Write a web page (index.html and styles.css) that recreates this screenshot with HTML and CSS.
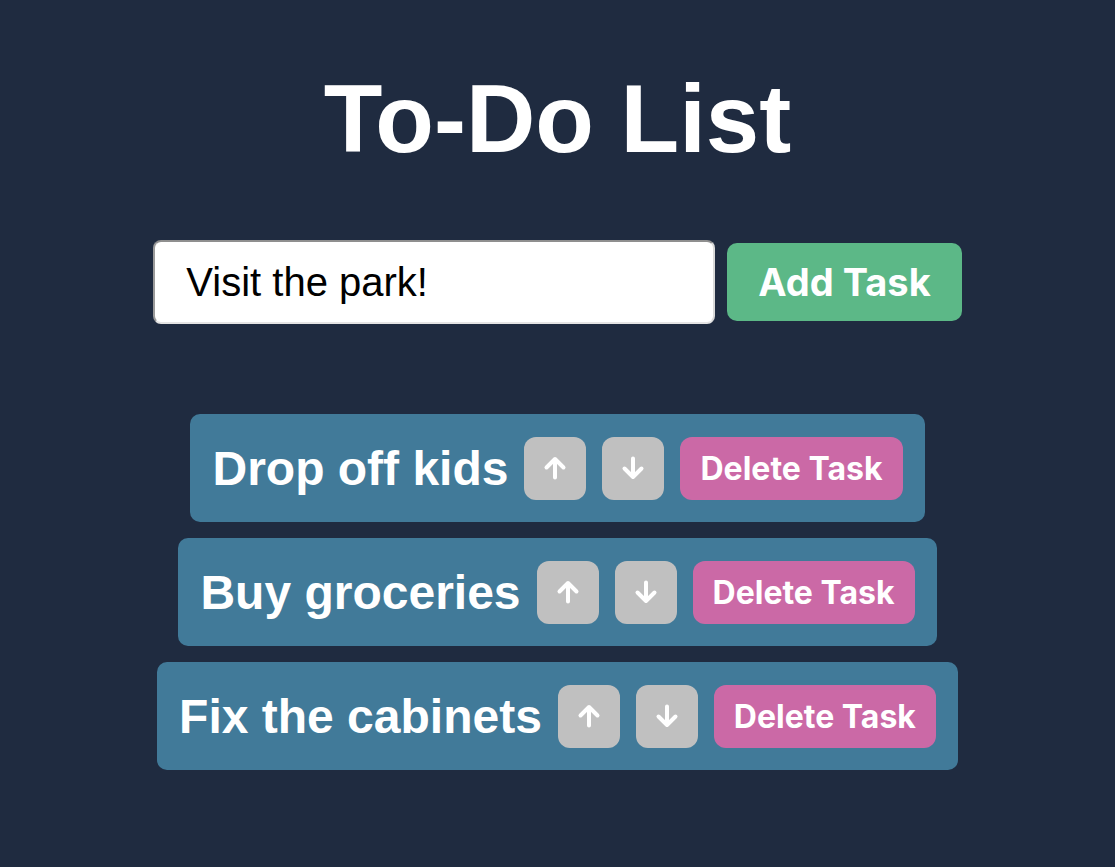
FILE: index.html
```html
<!DOCTYPE html>
<html lang="en">
<head>
<meta charset="utf-8">
<title>To-Do List</title>
<link rel="stylesheet" href="styles.css">
</head>
<body>
<main class="app">
  <h1 class="title">To-Do List</h1>
  <form class="add-form">
    <input class="task-input" type="text" value="Visit the park!">
    <button class="add-btn" type="button">Add Task</button>
  </form>
  <ol class="task-list">
    <li class="task">
      <span class="task-text">Drop off kids</span>
      <button class="move-btn" type="button" aria-label="Move up"><svg viewBox="0 0 24 24" width="24" height="24"><path d="M12 21.5V3M3.5 11.5L12 3l8.5 8.5" fill="none" stroke="#fff" stroke-width="4" stroke-linecap="round" stroke-linejoin="round"/></svg></button>
      <button class="move-btn" type="button" aria-label="Move down"><svg viewBox="0 0 24 24" width="24" height="24"><path d="M12 2.5V21M3.5 12.5L12 21l8.5-8.5" fill="none" stroke="#fff" stroke-width="4" stroke-linecap="round" stroke-linejoin="round"/></svg></button>
      <button class="delete-btn" type="button">Delete Task</button>
    </li>
    <li class="task">
      <span class="task-text">Buy groceries</span>
      <button class="move-btn" type="button" aria-label="Move up"><svg viewBox="0 0 24 24" width="24" height="24"><path d="M12 21.5V3M3.5 11.5L12 3l8.5 8.5" fill="none" stroke="#fff" stroke-width="4" stroke-linecap="round" stroke-linejoin="round"/></svg></button>
      <button class="move-btn" type="button" aria-label="Move down"><svg viewBox="0 0 24 24" width="24" height="24"><path d="M12 2.5V21M3.5 12.5L12 21l8.5-8.5" fill="none" stroke="#fff" stroke-width="4" stroke-linecap="round" stroke-linejoin="round"/></svg></button>
      <button class="delete-btn" type="button">Delete Task</button>
    </li>
    <li class="task">
      <span class="task-text">Fix the cabinets</span>
      <button class="move-btn" type="button" aria-label="Move up"><svg viewBox="0 0 24 24" width="24" height="24"><path d="M12 21.5V3M3.5 11.5L12 3l8.5 8.5" fill="none" stroke="#fff" stroke-width="4" stroke-linecap="round" stroke-linejoin="round"/></svg></button>
      <button class="move-btn" type="button" aria-label="Move down"><svg viewBox="0 0 24 24" width="24" height="24"><path d="M12 2.5V21M3.5 12.5L12 21l8.5-8.5" fill="none" stroke="#fff" stroke-width="4" stroke-linecap="round" stroke-linejoin="round"/></svg></button>
      <button class="delete-btn" type="button">Delete Task</button>
    </li>
  </ol>
</main>
</body>
</html>
```

FILE: styles.css
```css
html, body {
  margin: 0;
  padding: 0;
  background: #1f2b40;
  min-height: 100%;
}

body {
  font-family: "Liberation Sans", Arial, sans-serif;
  color: #fff;
}

.app {
  display: flex;
  flex-direction: column;
  align-items: center;
  padding-top: 64px;
}

.title {
  margin: 0;
  font-size: 96px;
  font-weight: 700;
  line-height: 110px;
}

.add-form {
  display: flex;
  align-items: center;
  gap: 12px;
  margin-top: 66px;
}

.task-input {
  box-sizing: border-box;
  width: 562px;
  height: 84px;
  padding: 0 31px;
  font-family: "Liberation Sans", Arial, sans-serif;
  font-size: 40px;
  color: #000;
  background: #fff;
  border: 2px solid;
  border-color: #8f8f8f #d9d9d9 #e4e4e4 #9a9a9a;
  border-radius: 8px;
  outline: none;
}

.add-btn {
  box-sizing: border-box;
  height: 78px;
  padding: 0 31px;
  font-family: Inter, "Liberation Sans", sans-serif;
  font-size: 38px;
  font-weight: 700;
  color: #fff;
  background: #5cb887;
  border: none;
  border-radius: 10px;
}

.task-list {
  list-style: none;
  margin: 90px 0 0;
  padding: 0;
  display: flex;
  flex-direction: column;
  align-items: center;
  gap: 16px;
}

.task {
  display: flex;
  align-items: center;
  height: 108px;
  box-sizing: border-box;
  padding: 0 22px;
  background: #417a99;
  border-radius: 10px;
  gap: 16px;
}

.task-text {
  font-size: 48px;
  font-weight: 700;
}

.move-btn {
  box-sizing: border-box;
  width: 62px;
  height: 63px;
  padding: 0;
  display: flex;
  align-items: center;
  justify-content: center;
  background: #c0c0c0;
  border: none;
  border-radius: 12px;
}

.move-btn svg {
  display: block;
}

.delete-btn {
  box-sizing: border-box;
  height: 63px;
  padding: 0 20px;
  font-family: Inter, "Liberation Sans", sans-serif;
  font-size: 32px;
  font-weight: 700;
  color: #fff;
  background: #cb69a6;
  border: none;
  border-radius: 12px;
}
```
